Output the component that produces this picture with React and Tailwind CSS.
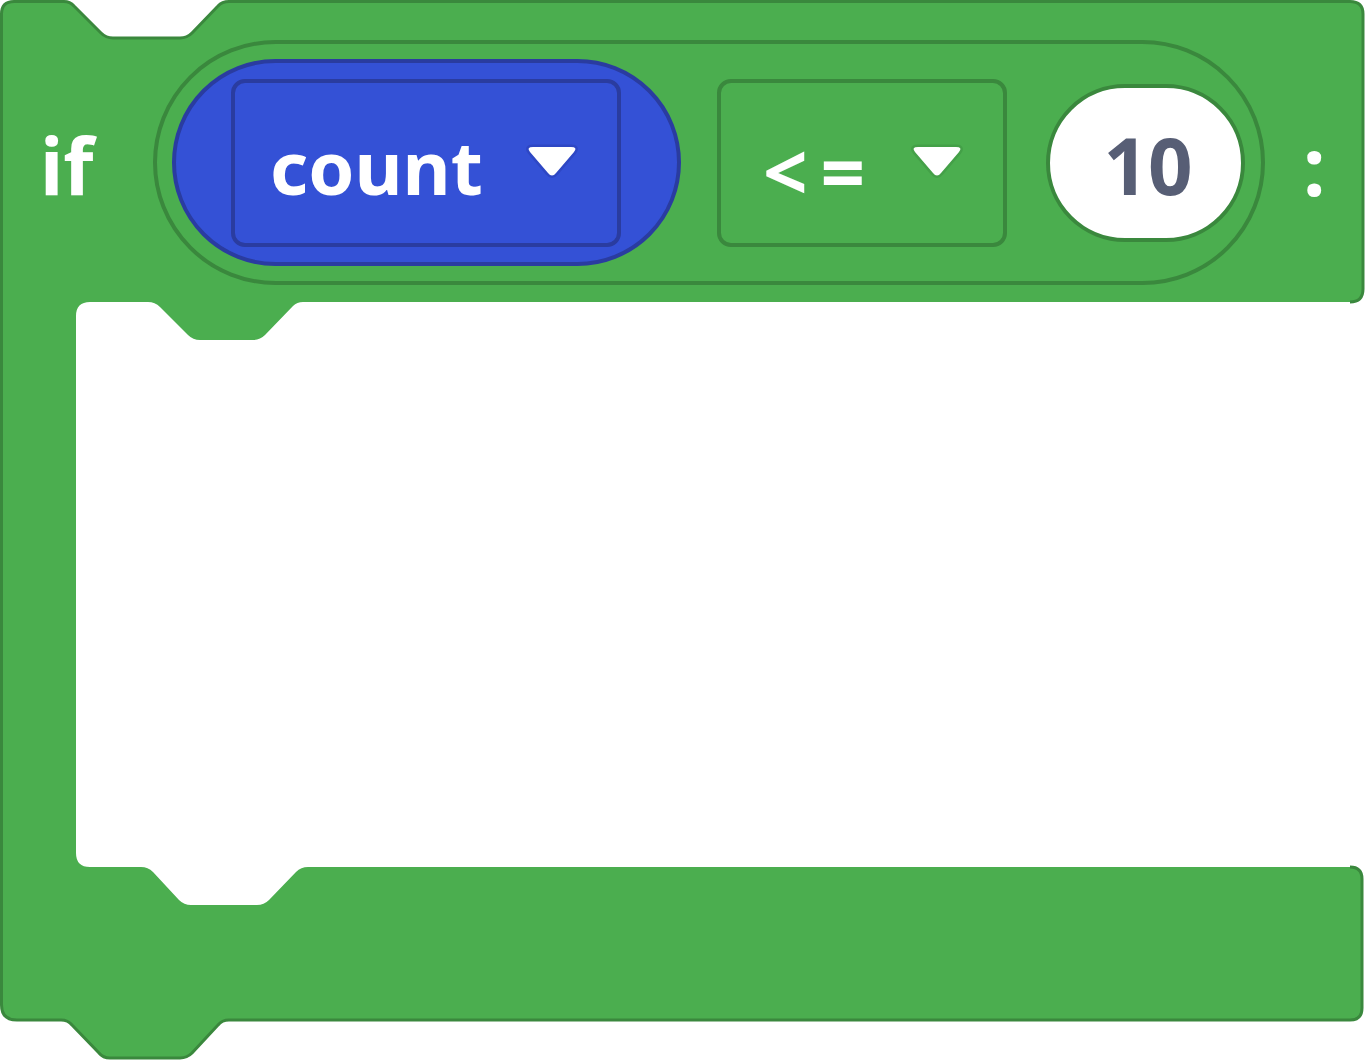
import React from "react";

const FILL = "#4bae4f";
const STROKE = "#3a883d";

function BlockShape() {
  const fillPath =
    "M1.5 14 Q1.5 1.5 14 1.5 L64 1.5 Q70 1.5 74 6 L101 33 Q106 38 113 38 L180 38 Q187 38 192 33 L218 6 Q222 1.5 229 1.5 L1350 1.5 Q1363 1.5 1363 14 L1363 289 Q1363 302 1351 302 L303 302 Q297 302 293 306 L265 335 Q260 340 253 340 L200 340 Q193 340 188 335 L160 307 Q155 302 148 302 L90 302 Q76 302 76 316 L76 853 Q76 867 90 867 L141 867 Q148 867 153 872 L179 900 Q184 905 191 905 L257 905 Q264 905 269 900 L296 872 Q301 867 308 867 L1350 867 Q1362 867 1362 879 L1362 1008 Q1362 1020 1350 1020 L229 1020 Q222 1020 218 1025 L192 1053 Q187 1058 180 1058 L110 1058 Q103 1058 99 1053 L72 1025 Q68 1020 61 1020 L17 1020 Q1.5 1020 1.5 1005 Z";
  const strokeTop =
    "M1350 302 Q1363 302 1363 289 L1363 14 Q1363 1.5 1350 1.5 L229 1.5 Q222 1.5 218 6 L192 33 Q187 38 180 38 L113 38 Q106 38 101 33 L74 6 Q70 1.5 64 1.5 L14 1.5 Q1.5 1.5 1.5 14 L1.5 1005 Q1.5 1020 17 1020 L61 1020 Q68 1020 72 1025 L99 1053 Q103 1058 110 1058 L180 1058 Q187 1058 192 1053 L218 1025 Q222 1020 229 1020 L1350 1020 Q1362 1020 1362 1008 L1362 879 Q1362 867 1350 867";
  return (
    <svg
      className="absolute left-0 top-0"
      width="1365"
      height="1062"
      viewBox="0 0 1365 1062"
    >
      <path d={fillPath} fill={FILL} />
      <path d={strokeTop} fill="none" stroke={STROKE} strokeWidth="3" strokeLinejoin="round" />
    </svg>
  );
}

function Arrow({ halo }) {
  return (
    <svg width="58" height="40" viewBox="-4 -4 58 40" className="block">
      <path
        d="M6 0 H44 Q51 0 47 5 L29 26 Q25 31 21 26 L3 5 Q-1 0 6 0 Z"
        fill="#ffffff"
        stroke={halo}
        strokeWidth="5"
        strokeLinejoin="round"
        paintOrder="stroke"
      />
    </svg>
  );
}

export default function App() {
  const font = { fontFamily: '"Noto Sans", "Open Sans", sans-serif' };
  return (
    <div className="relative w-[1365px] h-[1062px] bg-white overflow-hidden" style={font}>
      <BlockShape />
      <div className="relative flex items-start pt-[40px]">
        <div className="w-[153px] h-[245px] pl-[40px] flex items-center">
          <span className="text-white font-bold text-[78px] leading-none mt-[4px]">if</span>
        </div>
        <div className="w-[1112px] h-[245px] rounded-full border-4 border-[#3a883d] flex items-center pl-[15px]">
          <div className="w-[509px] h-[207px] rounded-full bg-[#3451d6] border-4 border-[#2a3ca0] flex items-center pl-[55px]">
            <div className="w-[390px] h-[168px] rounded-[14px] border-4 border-[#2a3ca0] flex items-center pl-[35px]">
              <span className="text-white font-bold text-[74px] leading-none w-[213px] mt-[9px]">count</span>
              <div className="ml-[40px] mt-[1px]">
                <Arrow halo="#2e47c4" />
              </div>
            </div>
          </div>
          <div className="ml-[36px] w-[290px] h-[168px] rounded-[14px] border-4 border-[#3a883d] flex items-center pl-[42px]">
            <span className="text-white font-bold text-[78px] leading-none tracking-[13px] w-[145px] mt-[16px]">&lt;=</span>
            <div className="mt-[1px]">
              <Arrow halo="#44a048" />
            </div>
          </div>
          <div className="ml-[39px] w-[199px] h-[158px] rounded-full bg-white border-4 border-[#3a883d] flex items-center justify-center pl-[5px]">
            <span className="text-[#575e75] font-bold text-[78px] leading-none mt-[5px]">10</span>
          </div>
        </div>
        <div className="h-[245px] pl-[38px] flex items-center">
          <span className="text-white font-bold text-[80px] leading-none mt-[4px]">:</span>
        </div>
      </div>
    </div>
  );
}
